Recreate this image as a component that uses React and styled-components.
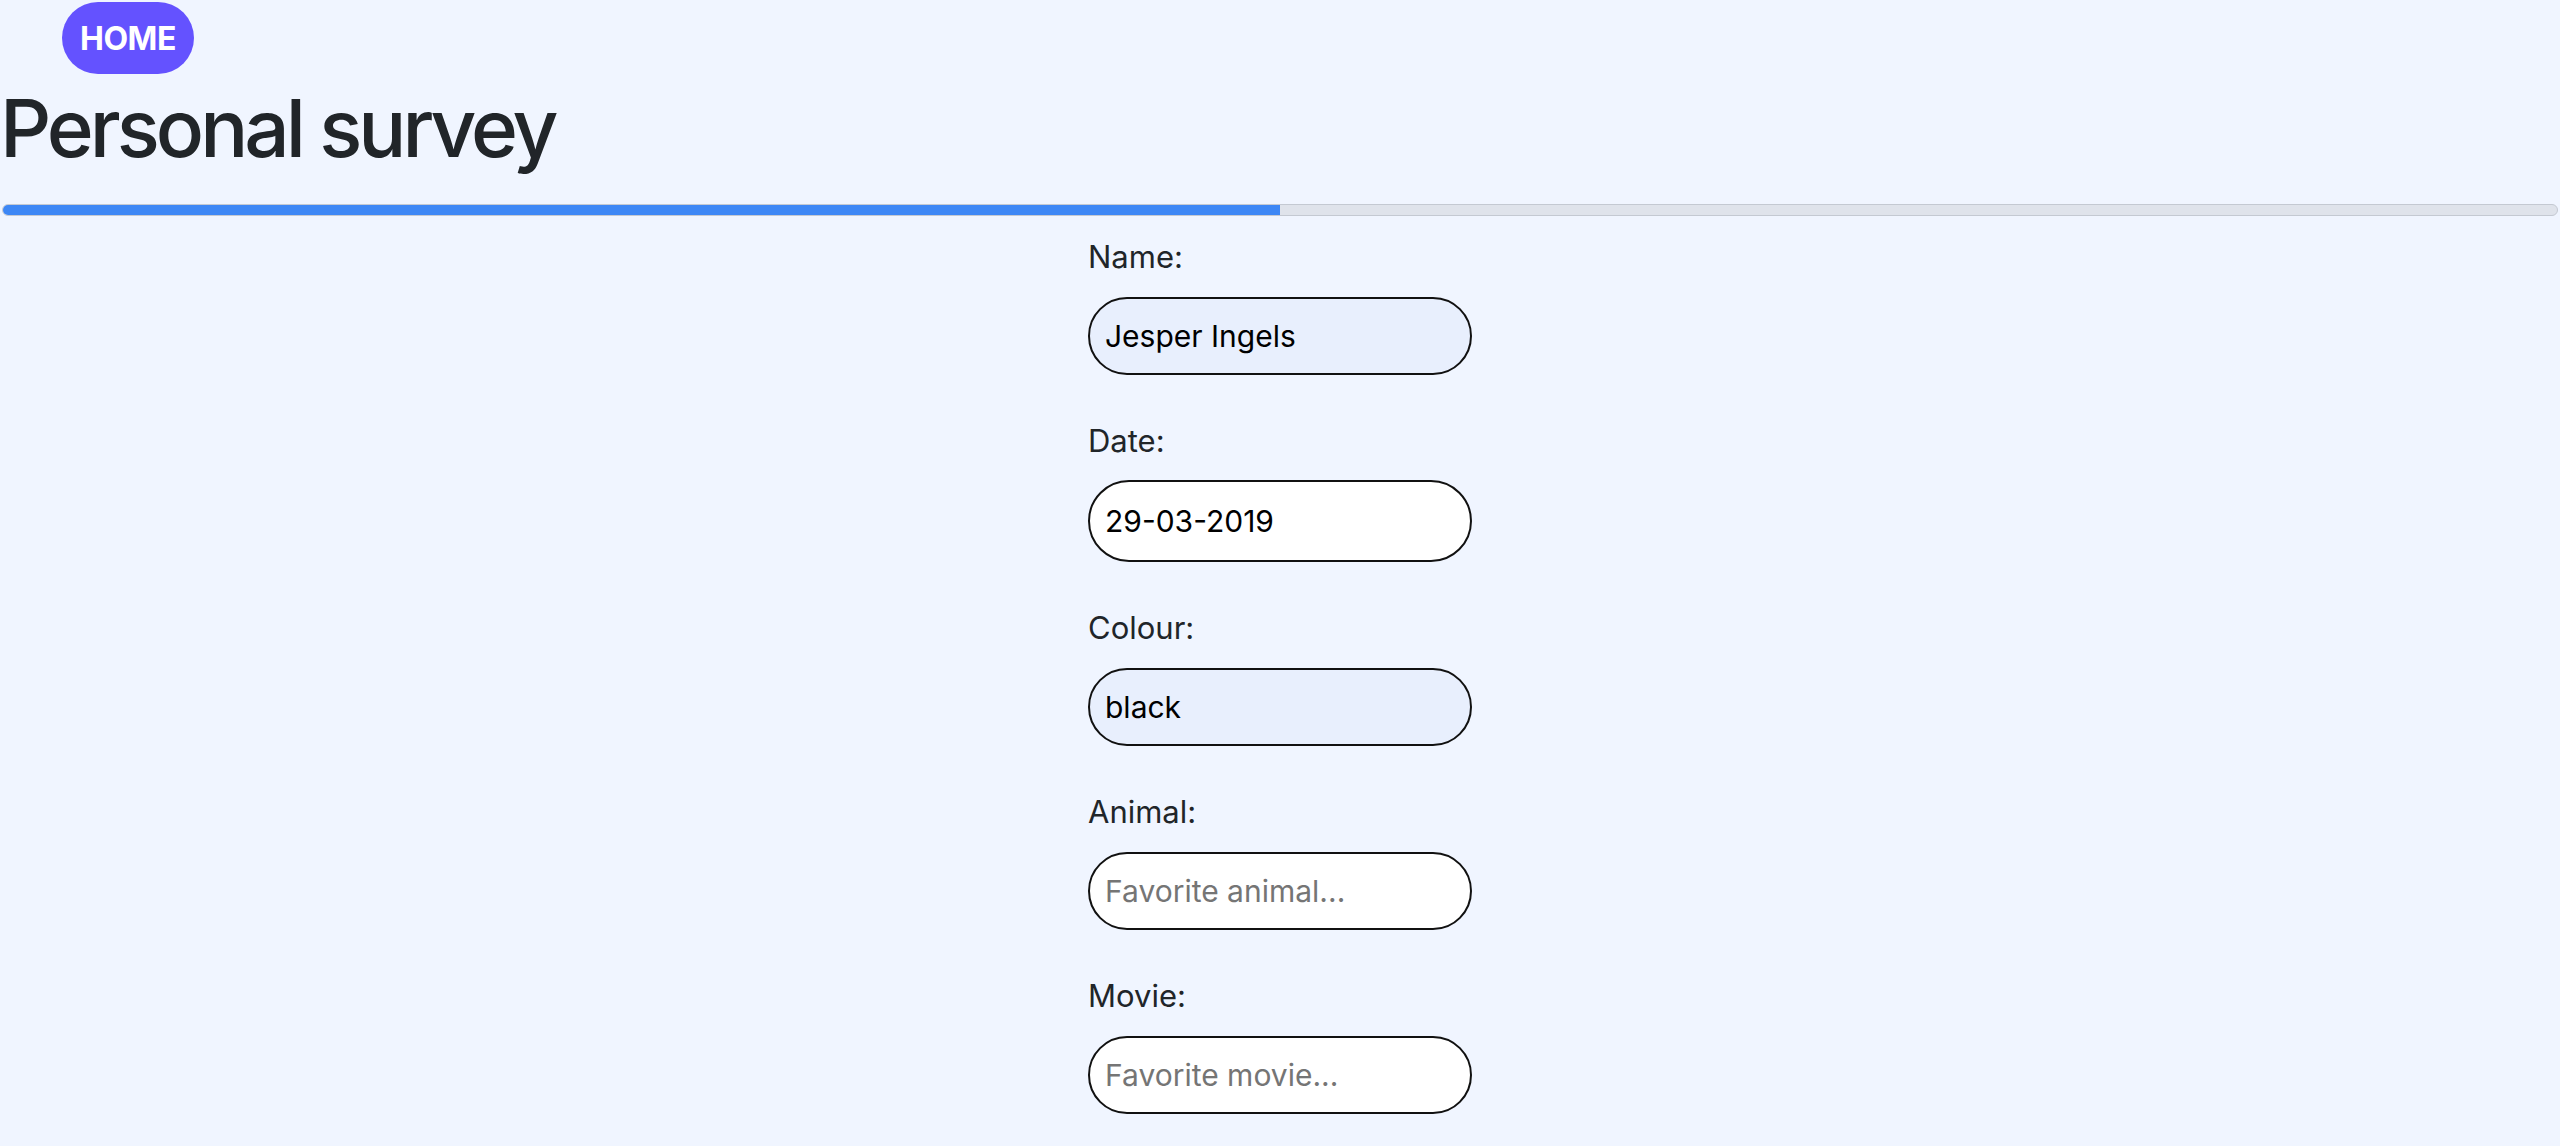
import styled, { createGlobalStyle } from 'styled-components';

const GlobalStyle = createGlobalStyle`
  html, body {
    margin: 0;
    padding: 0;
    background: #f0f5ff;
  }
  body {
    font-family: Inter, "Noto Sans", "Liberation Sans", sans-serif;
    color: #212529;
  }
  * {
    box-sizing: border-box;
  }
`;

const fields = [
  { label: 'Name', value: 'Jesper Ingels', filled: true },
  { label: 'Date', value: '29-03-2019', tall: true },
  { label: 'Colour', value: 'black', filled: true },
  { label: 'Animal', placeholder: 'Favorite animal...' },
  { label: 'Movie', placeholder: 'Favorite movie...' },
];

const Page = styled.div`
  display: flex;
  flex-direction: column;
  min-height: 1146px;
`;

const Nav = styled.nav`
  display: flex;
  padding: 2px 0 0 62px;
`;

const HomeButton = styled.button`
  height: 72px;
  padding: 0 18px;
  border: none;
  border-radius: 36px;
  background: #6452ff;
  color: #fff;
  font-family: inherit;
  font-size: 32px;
  font-weight: 700;
  letter-spacing: -0.5px;
  cursor: pointer;
`;

const Title = styled.h1`
  margin: 6px 0 0;
  font-size: 80px;
  line-height: 96px;
  font-weight: 500;
  letter-spacing: -4px;
  color: #212529;
`;

const Progress = styled.div`
  display: flex;
  height: 12px;
  margin: 28px 2px 0;
  border: 1px solid #c4c9d2;
  border-radius: 6px;
  background: #dfe3eb;
  overflow: hidden;
`;

const ProgressFill = styled.div`
  height: 100%;
  background: #3d87f5;
`;

const Form = styled.form`
  display: flex;
  flex-direction: column;
  width: 384px;
  margin: 0 auto;
  padding-top: 17px;
`;

const Field = styled.div`
  display: flex;
  flex-direction: column;
  margin-bottom: 42px;
`;

const Label = styled.label`
  font-size: 31px;
  line-height: 48px;
  color: #212529;
`;

const Input = styled.input`
  height: ${({ $tall }) => ($tall ? '82px' : '78px')};
  margin-top: ${({ $tall }) => ($tall ? '15px' : '16px')};
  padding: 0 15px;
  border: 2px solid #111;
  border-radius: 41px;
  background: ${({ $filled }) => ($filled ? '#e8effd' : '#ffffff')};
  color: #000;
  font-family: inherit;
  font-size: 30px;
  outline: none;

  &::placeholder {
    color: #757575;
  }
`;

export default function App() {
  return (
    <Page>
      <GlobalStyle />
      <Nav>
        <HomeButton type="button">HOME</HomeButton>
      </Nav>
      <Title>Personal survey</Title>
      <Progress>
        <ProgressFill style={{ width: '50%' }} />
      </Progress>
      <Form>
        {fields.map((f) => (
          <Field key={f.label}>
            <Label>{f.label}:</Label>
            <Input
              type="text"
              defaultValue={f.value}
              placeholder={f.placeholder}
              $filled={f.filled}
              $tall={f.tall}
            />
          </Field>
        ))}
      </Form>
    </Page>
  );
}
